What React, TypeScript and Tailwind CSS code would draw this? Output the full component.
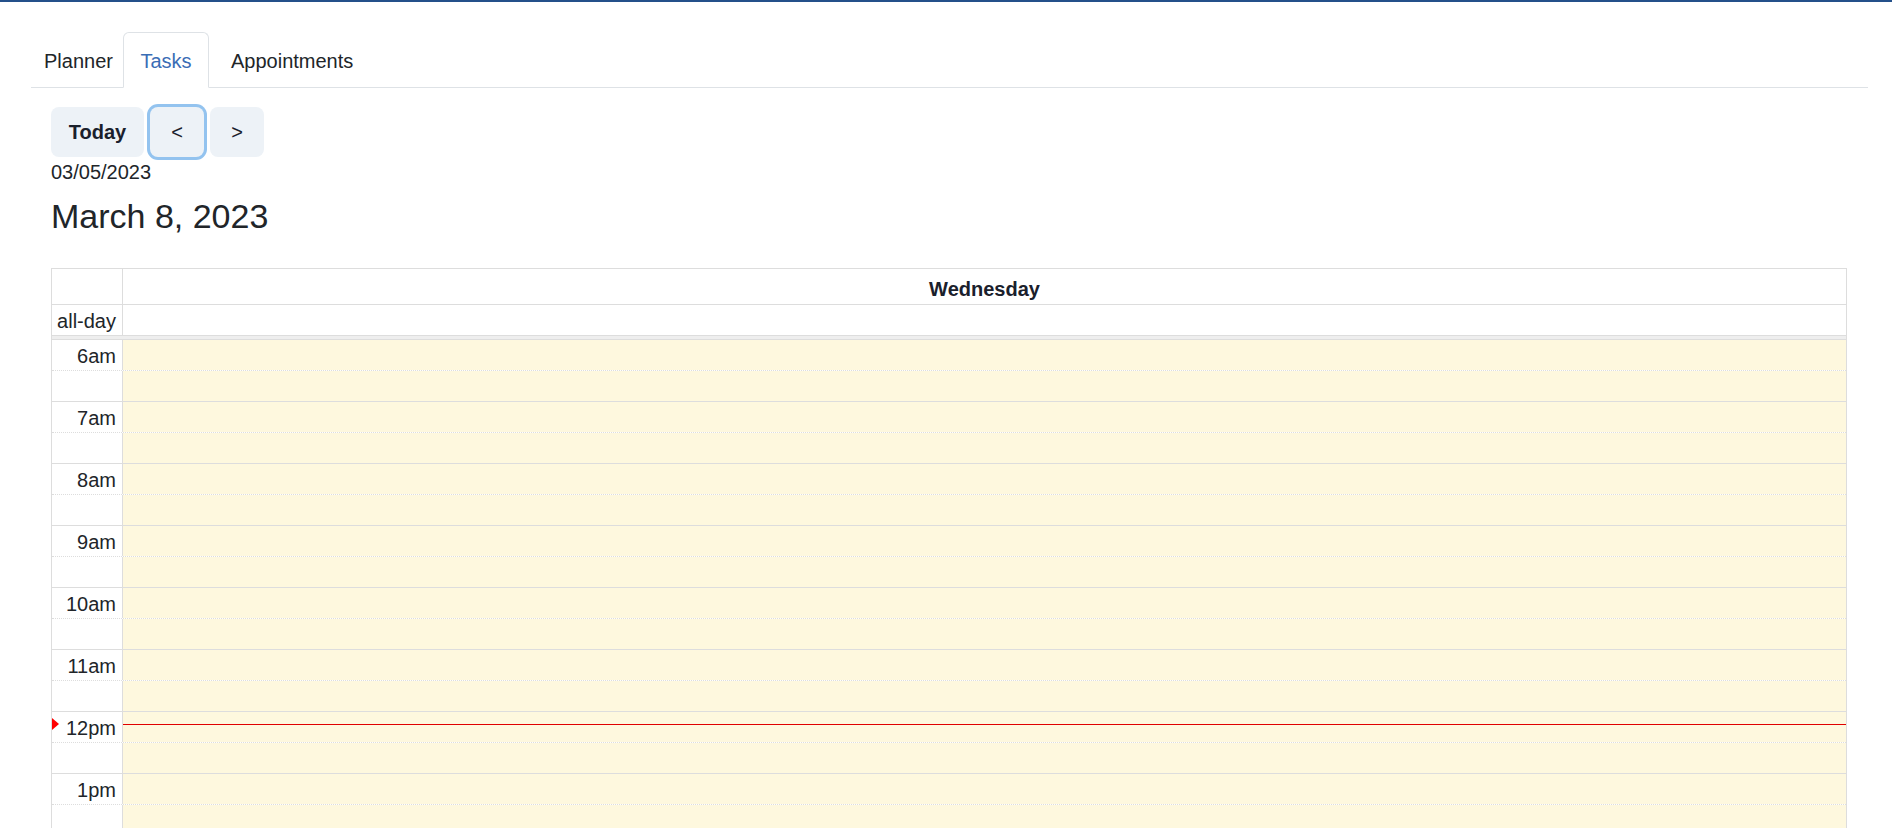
const hours = ["6am", "7am", "8am", "9am", "10am", "11am", "12pm", "1pm"];

export default function App() {
  return (
    <div className="h-[828px] overflow-hidden bg-white text-[#212529] font-['Liberation_Sans',Arial,sans-serif]">
      <div className="h-[2px] bg-[#24508a]" />

      <div className="pl-[31px] pr-[24px] pt-[30px]">
        {/* tabs */}
        <nav className="flex border-b border-[#dee2e6] text-[20px]">
          <button className="-mb-px flex h-[56px] w-[92px] items-center pl-[13px] pt-[2px]">Planner</button>
          <button className="-mb-px flex h-[56px] w-[86px] items-center justify-center rounded-t-[6px] border border-[#dee2e6] border-b-white bg-white pt-[2px] text-[#3a6db5]">
            Tasks
          </button>
          <button className="-mb-px flex h-[56px] items-center pl-[22px] pt-[2px]">Appointments</button>
        </nav>

        <div className="pl-[20px] pr-[21px]">
          <div className="mt-[19px] flex gap-[6px] text-[20px] text-[#1a202c]">
            <button className="h-[50px] w-[93px] rounded-[8px] bg-[#edf2f7] font-bold">Today</button>
            <button className="h-[50px] w-[54px] rounded-[8px] bg-[#edf2f7] ring-[3px] ring-[#93c3ef]">&lt;</button>
            <button className="h-[50px] w-[54px] rounded-[8px] bg-[#edf2f7]">&gt;</button>
          </div>
          <div className="text-[20px] leading-[30px]">03/05/2023</div>
          <h2 className="mt-[8px] text-[34px] leading-[42px]">March 8, 2023</h2>

          {/* calendar */}
          <div className="mt-[31px] border-x border-t border-[#ddd] text-[20px]">
            <div className="grid h-[35px] grid-cols-[71px_1fr]">
              <div className="border-r border-[#ddd]" />
              <div className="pt-[5px] text-center font-bold leading-[30px] text-[#1a202c]">Wednesday</div>
            </div>
            <div className="grid h-[31px] grid-cols-[71px_1fr] border-t border-[#ddd]">
              <div className="border-r border-[#ddd] pr-[6px] pt-[2px] text-right leading-[28px]">all-day</div>
              <div />
            </div>
            <div className="h-[4px] border-t border-[#ddd] bg-[#eeeeee]" />

            <div className="relative">
              {hours.map((h) => (
                <div key={h}>
                  <div className="grid h-[31px] grid-cols-[71px_1fr] border-t border-[#ddd]">
                    <div className="border-r border-[#ddd] pr-[6px] pt-[2px] text-right leading-[28px]">{h}</div>
                    <div className="bg-[#fef8de]" />
                  </div>
                  <div className="grid h-[31px] grid-cols-[71px_1fr] border-t border-dotted border-[#ddd]">
                    <div className="border-r border-solid border-[#ddd]" />
                    <div className="bg-[#fef8de]" />
                  </div>
                </div>
              ))}

              {/* now indicator */}
              <div className="absolute left-0 top-[379px] h-0 w-0 border-y-[6px] border-l-[7px] border-y-transparent border-l-[#ff0000]" />
              <div className="absolute left-[71px] right-0 top-[385px] h-px bg-[#e00000]" />
            </div>
          </div>
        </div>
      </div>
    </div>
  );
}
